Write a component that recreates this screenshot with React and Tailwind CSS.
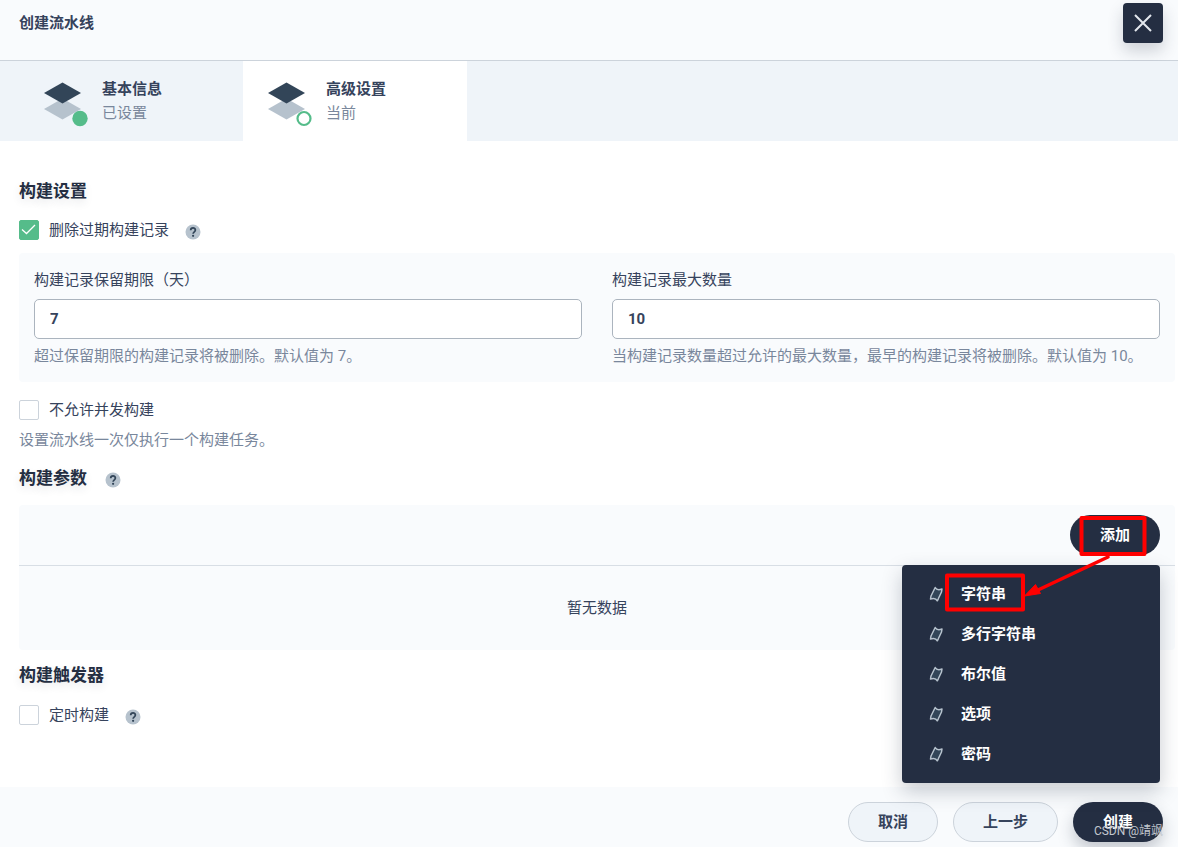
import React from "react";

const FONT =
  "font-['Roboto','Noto_Sans_CJK_SC',sans-serif]";

const STEPS = [
  { title: "基本信息", status: "已设置", current: false },
  { title: "高级设置", status: "当前", current: true },
];

const PARAM_TYPES = ["字符串", "多行字符串", "布尔值", "选项", "密码"];

function LayersIcon({ current }) {
  return (
    <svg className="size-[50px] shrink-0" viewBox="0 0 50 50" aria-hidden="true">
      <path d="M6 32 24.500 21.500 43 32 24.500 42.500Z" fill="#b6c2cd" />
      <path d="M6 16 24.500 5.500 43 16 24.500 26.500Z" fill="#324558" />
      {current ? (
        <circle cx="42" cy="41.500" r="6.500" fill="#fff" stroke="#55bc8a" strokeWidth="2.200" />
      ) : (
        <circle cx="42" cy="41.500" r="7.700" fill="#55bc8a" />
      )}
    </svg>
  );
}

function HelpIcon() {
  return (
    <svg className="size-4" viewBox="0 0 16 16" fill="none" role="img" aria-label="帮助">
      <circle cx="8" cy="8" r="7.500" fill="#b6c2cd" />
      <path
        d="M5.700 6.300C5.700 3.200 10.400 3.200 10.400 6.100 10.400 7.800 8.200 7.800 8.100 9.700"
        stroke="#324558"
        strokeWidth="1.700"
      />
      <circle cx="8.100" cy="11.800" r="1.100" fill="#324558" />
    </svg>
  );
}

function ParamIcon() {
  return (
    <svg className="size-5 shrink-0" viewBox="0 0 20 20" fill="none" aria-hidden="true">
      <path
        d="M9.200 3.500 Q10.800 6.800 16 5 L15.500 8 L12.300 14.800 L11.300 16.800 Q9.500 13.400 4.500 15 L5 12 L8.200 5.500Z"
        fill="#324558"
        stroke="#b6c2cd"
        strokeWidth="1.500"
        strokeLinejoin="round"
      />
    </svg>
  );
}

function SectionTitle({ children }) {
  return (
    <h3 className="text-[17px] leading-6 font-bold text-[#242e42] [text-shadow:0_4px_8px_rgba(36,46,66,0.1)]">
      {children}
    </h3>
  );
}

function Checkbox({ id, label, defaultChecked, help }) {
  return (
    <div className="flex h-5 items-center">
      <span className="relative flex size-5">
        <input
          id={id}
          type="checkbox"
          defaultChecked={defaultChecked}
          className="peer size-5 appearance-none rounded-[2px] border border-[#ccd3db] bg-white checked:border-[#55bc8a] checked:bg-[#55bc8a]"
        />
        <svg
          className="pointer-events-none absolute inset-0 hidden size-5 peer-checked:block"
          viewBox="0 0 20 20"
          fill="none"
          aria-hidden="true"
        >
          <path d="M3 9.500 7.500 13.500 16 5" stroke="#fff" strokeWidth="1.300" />
        </svg>
      </span>
      <label htmlFor={id} className="ml-[10px] text-[15px] leading-5 text-[#36435c]">
        {label}
      </label>
      {help && (
        <span className="ml-4 pt-[3px]">
          <HelpIcon />
        </span>
      )}
    </div>
  );
}

function NumberField({ id, label, value, hint }) {
  return (
    <div className="flex min-w-0 flex-1 flex-col">
      <label htmlFor={id} className="text-[15px] leading-6 text-[#36435c]">
        {label}
      </label>
      <input
        id={id}
        type="text"
        defaultValue={value}
        className="mt-[7px] h-10 w-full rounded-[5px] border border-[#abb4be] bg-white px-[15px] text-[15px] font-bold text-[#36435c] outline-none"
      />
      <p className="mt-[5px] text-[15px] leading-6 text-[#79879c]">{hint}</p>
    </div>
  );
}

function Highlights() {
  return (
    <svg
      className="pointer-events-none absolute top-0 right-0 z-20 h-[100px] w-[220px] overflow-visible"
      viewBox="0 0 220 100"
      fill="none"
      aria-hidden="true"
    >
      <rect x="141.500" y="3" width="63" height="36" stroke="#f00" strokeWidth="4" strokeLinejoin="round" />
      <rect x="7" y="60.500" width="76" height="34" stroke="#f00" strokeWidth="4" strokeLinejoin="round" />
      <path d="M168 42 98 75" stroke="#f00" strokeWidth="3.500" strokeLinecap="round" />
      <path d="M84.500 81 95.500 69.500 100.500 78.500Z" fill="#f00" stroke="#f00" strokeLinejoin="round" />
    </svg>
  );
}

export default function App() {
  return (
    <div className={`flex min-h-screen flex-col overflow-hidden bg-white text-[#36435c] ${FONT}`}>
      <header className="flex h-[61px] items-start justify-between border-b border-[#ccd3db] bg-[#f9fbfd] pr-[15px] pl-[19px]">
        <h2 className="mt-[11px] text-[15px] leading-6 font-bold text-[#36435c]">创建流水线</h2>
        <button
          type="button"
          aria-label="关闭"
          className="mt-[3px] flex size-10 items-center justify-center rounded-[4px] bg-[#242e42] shadow-[0_8px_16px_rgba(36,46,66,0.2)]"
        >
          <svg className="size-5" viewBox="0 0 20 20" fill="none" aria-hidden="true">
            <path d="M2 2 18 18M18 2 2 18" stroke="#e3e8ee" strokeWidth="2" />
          </svg>
        </button>
      </header>

      <ol className="flex h-20 bg-[#eff4f9] pl-[19px]">
        {STEPS.map((step) => (
          <li
            key={step.title}
            className={`flex w-56 items-start pt-4 pl-[19px] ${step.current ? "bg-white" : ""}`}
          >
            <LayersIcon current={step.current} />
            <div className="ml-[14px] text-[15px] leading-6">
              <div className="font-bold text-[#36435c]">{step.title}</div>
              <div className="text-[#79879c]">{step.status}</div>
            </div>
          </li>
        ))}
      </ol>

      <main className="flex-1 pt-[38px] pr-[3px] pb-[62px] pl-[19px]">
        <SectionTitle>构建设置</SectionTitle>
        <div className="mt-[17px]">
          <Checkbox id="discard" label="删除过期构建记录" defaultChecked help />
        </div>
        <div className="mt-[13px] flex gap-[30px] rounded-[4px] bg-[#f9fbfd] p-[15px] pb-[14px]">
          <NumberField
            id="days"
            label="构建记录保留期限（天）"
            value="7"
            hint="超过保留期限的构建记录将被删除。默认值为 7。"
          />
          <NumberField
            id="count"
            label="构建记录最大数量"
            value="10"
            hint="当构建记录数量超过允许的最大数量，最早的构建记录将被删除。默认值为 10。"
          />
        </div>
        <div className="mt-[18px]">
          <Checkbox id="concurrent" label="不允许并发构建" />
        </div>
        <p className="mt-2 text-[15px] leading-6 text-[#79879c]">设置流水线一次仅执行一个构建任务。</p>

        <div className="mt-[14px] flex items-center gap-[18px]">
          <SectionTitle>构建参数</SectionTitle>
          <span className="pt-[3px]">
            <HelpIcon />
          </span>
        </div>
        <section className="mt-[15px] rounded-[4px] bg-[#f9fbfd]">
          <div className="flex h-[61px] items-start justify-end border-b border-[#d8dee5] pt-[10px] pr-[15px]">
            <div className="relative">
              <button
                type="button"
                className="h-10 w-[90px] rounded-full bg-[#242e42] text-[15px] font-bold text-white"
              >
                添加
              </button>
              <ul className="absolute top-[50px] right-0 z-10 w-[258px] rounded-[4px] bg-[#242e42] py-[9px] shadow-[0_8px_20px_rgba(36,46,66,0.25)]">
                {PARAM_TYPES.map((type) => (
                  <li key={type}>
                    <button
                      type="button"
                      className="flex h-10 w-full items-center gap-[15px] px-6 text-[15px] font-bold text-white"
                    >
                      <ParamIcon />
                      {type}
                    </button>
                  </li>
                ))}
              </ul>
              <Highlights />
            </div>
          </div>
          <p className="flex h-[84px] items-center justify-center text-[15px] leading-6 text-[#36435c]">
            暂无数据
          </p>
        </section>

        <div className="mt-[13px]">
          <SectionTitle>构建触发器</SectionTitle>
        </div>
        <div className="mt-[18px]">
          <Checkbox id="timer" label="定时构建" help />
        </div>
      </main>

      <footer className="flex h-[60px] items-start justify-end gap-[15px] bg-[#f9fbfd] pt-[15px] pr-[15px]">
        <button
          type="button"
          className="h-10 w-[90px] rounded-full border border-[#ccd3db] bg-[#eff4f9] text-[15px] font-bold text-[#36435c]"
        >
          取消
        </button>
        <button
          type="button"
          className="h-10 w-[105px] rounded-full border border-[#ccd3db] bg-[#eff4f9] text-[15px] font-bold text-[#36435c]"
        >
          上一步
        </button>
        <div className="relative">
          <button
            type="button"
            className="h-10 w-[90px] rounded-full bg-[#242e42] text-[15px] font-bold text-white shadow-[0_8px_16px_rgba(36,46,66,0.25)]"
          >
            创建
          </button>
          <span className="pointer-events-none absolute top-[21px] right-0 text-[12px] leading-4 whitespace-nowrap text-[#c3c7ce]">
            CSDN @靖飒
          </span>
        </div>
      </footer>
    </div>
  );
}
